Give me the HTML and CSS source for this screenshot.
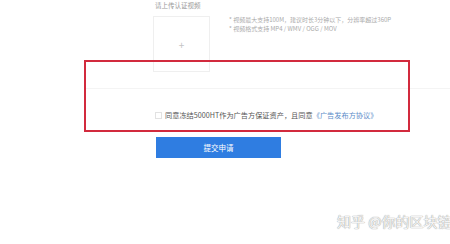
FILE: index.html
```html
<!DOCTYPE html>
<html lang="zh-CN">
<head>
  <meta charset="UTF-8" />
  <meta name="viewport" content="width=device-width, initial-scale=1" />
  <title>认证视频</title>
  <link rel="stylesheet" href="styles.css">
</head>
<body>
  <div class="page">
    <div class="upload-row">
      <div class="upload-col">
        <div class="upload-label">请上传认证视频</div>
        <div class="upload-box">+</div>
      </div>
      <ul class="upload-tips">
        <li>* 视频最大支持100M，建议时长3分钟以下，分辨率超过360P</li>
        <li>* 视频格式支持 MP4 / WMV / OGG / MOV</li>
      </ul>
    </div>
    <div class="divider"></div>
    <label class="agree"><span class="check"></span>同意冻结5000HT作为广告方保证资产，且同意<a class="agree-link">《广告发布方协议》</a></label>
    <button class="submit">提交申请</button>
    <div class="mark-box"></div>
    <div class="watermark">知乎 @你的区块链</div>
  </div>
</body>
</html>
```

FILE: styles.css
```css
html, body { margin: 0; background: #ffffff; overflow: hidden; }
body { font-family: "Noto Sans CJK SC", "Noto Sans", sans-serif; color: #555; }
.page { position: relative; width: 450px; height: 244px; }

.upload-row { display: flex; padding-left: 152px; }
.upload-label { font-size: 6.5px; line-height: 10px; color: #9a9a9a; padding-left: 3px; }
.upload-box {
  width: 55px; height: 54px; margin: 6px 0 0 1px;
  border: 1px solid #efefef;
  display: flex; align-items: center; justify-content: center;
  color: #c4c4c4; font-size: 10px;
}
.upload-tips { list-style: none; margin: 15px 0 0 19px; padding: 0; font-size: 6px; line-height: 9px; color: #aaa; }

.divider { margin: 16px 0 0 84px; border-top: 1px solid #f4f4f4; }

.agree { display: flex; align-items: center; margin: 21px 0 0 155px; font-size: 7.2px; line-height: 10px; color: #555; white-space: nowrap; }
.check { width: 5px; height: 5px; border: 1px solid #e2e2e2; margin-right: 3px; }
.agree-link { color: #5b8cc8; }

.submit {
  display: block; margin: 17px 0 0 156px; width: 125px; height: 21px;
  background: #2f7de1; border: none; color: #fff;
  font-family: inherit; font-size: 7.5px; padding: 0;
}

.mark-box {
  position: absolute; left: 84px; top: 60px; width: 326px; height: 72px;
  box-sizing: border-box; border: 2px solid #d22a3d;
}
.watermark {
  position: absolute; left: 337px; top: 213px; white-space: nowrap;
  font-size: 14px; line-height: 17px; color: #f4f4f4;
  text-shadow: 0 0 1px #a4a4a4, 0 0 1px #a4a4a4;
}
```
